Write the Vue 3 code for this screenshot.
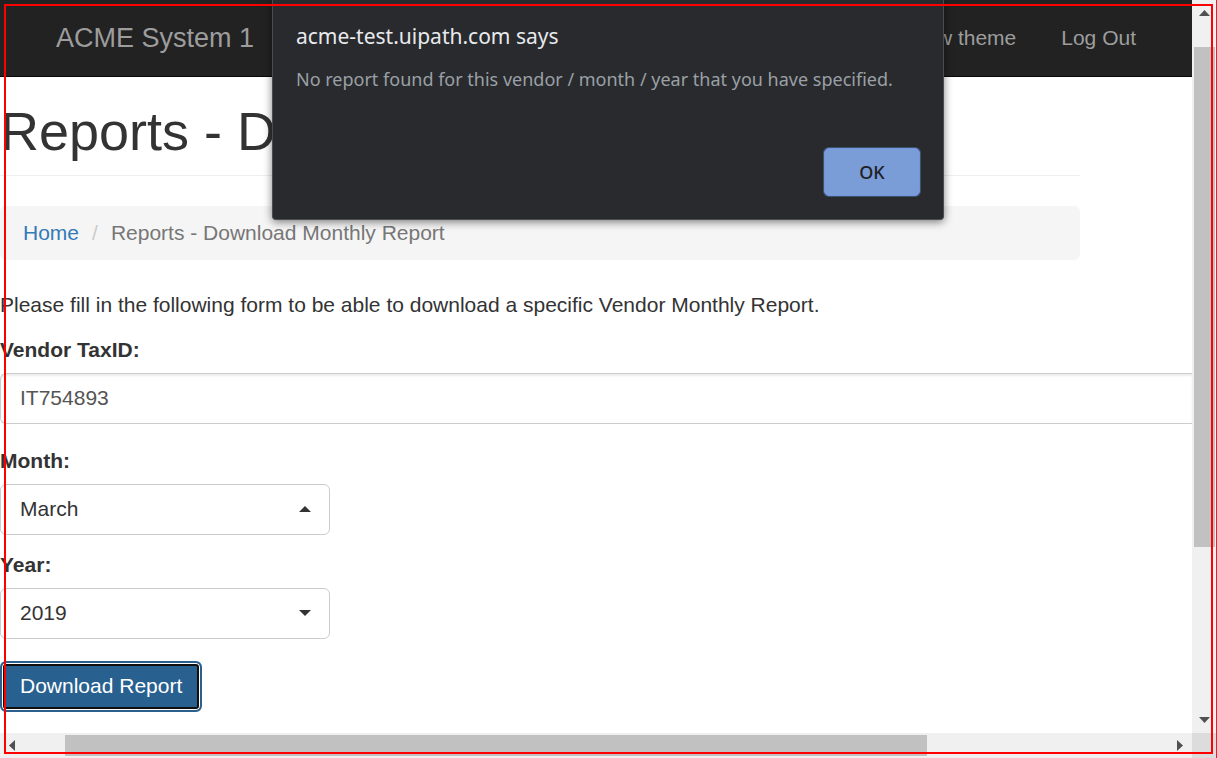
<script setup>
import { ref } from 'vue'

const taxId = ref('IT754893')
const month = ref('March')
const year = ref('2019')
const alertOpen = ref(true)
const months = ['January', 'February', 'March', 'April', 'May', 'June', 'July', 'August', 'September', 'October', 'November', 'December']
const years = ['2017', '2018', '2019', '2020']
</script>

<template>
  <div class="window">
    <div class="page">
      <nav class="navbar">
        <a class="brand" href="#">ACME System 1</a>
        <div class="links">
          <a href="#">New theme</a>
          <a href="#">Log Out</a>
        </div>
      </nav>

      <main>
        <header class="heading">
          <h1>Reports - Download Monthly Report</h1>
        </header>
        <ol class="breadcrumb">
          <li><a href="#">Home</a></li>
          <li class="slash" aria-hidden="true">/</li>
          <li>Reports - Download Monthly Report</li>
        </ol>

        <form @submit.prevent="alertOpen = true">
          <p>Please fill in the following form to be able to download a specific Vendor Monthly Report.</p>
          <div class="field wide">
            <label for="tax">Vendor TaxID:</label>
            <input id="tax" v-model="taxId" type="text" />
          </div>
          <div class="field">
            <label for="month">Month:</label>
            <div class="picker">
              <select id="month" v-model="month">
                <option v-for="m in months" :key="m">{{ m }}</option>
              </select>
              <svg class="caret" viewBox="0 0 12 6"><path d="M0 6L6 0L12 6Z" fill="#333" /></svg>
            </div>
          </div>
          <div class="field last">
            <label for="year">Year:</label>
            <div class="picker">
              <select id="year" v-model="year">
                <option v-for="y in years" :key="y">{{ y }}</option>
              </select>
              <svg class="caret" viewBox="0 0 12 6"><path d="M0 0L12 0L6 6Z" fill="#333" /></svg>
            </div>
          </div>
          <button class="submit" type="submit">Download Report</button>
        </form>
      </main>
    </div>

    <div class="vbar">
      <svg class="tip-v" viewBox="0 0 11 6"><path d="M0 6L5.5 0L11 6Z" fill="#505050" /></svg>
      <div class="vtrack"><div class="vthumb"></div></div>
      <svg class="tip-v" viewBox="0 0 11 6"><path d="M0 0L11 0L5.5 6Z" fill="#505050" /></svg>
    </div>
    <div class="hbar">
      <svg class="tip-h" viewBox="0 0 6 11"><path d="M6 0L0 5.5L6 11Z" fill="#505050" /></svg>
      <div class="htrack"><div class="hthumb"></div></div>
      <svg class="tip-h" viewBox="0 0 6 11"><path d="M0 0L6 5.5L0 11Z" fill="#505050" /></svg>
    </div>
    <div class="corner"></div>

    <div v-if="alertOpen" class="overlay">
      <section class="dialog" role="alertdialog" aria-labelledby="alert-title">
        <h2 id="alert-title">acme-test.uipath.com says</h2>
        <p>No report found for this vendor / month / year that you have specified.</p>
        <button type="button" @click="alertOpen = false">OK</button>
      </section>
    </div>
    <div class="outline"></div>
  </div>
</template>

<style>
body {
  overflow: hidden;
}
</style>

<style scoped>
* {
  box-sizing: border-box;
}
.window {
  position: relative;
  display: grid;
  grid-template-columns: minmax(0, 1fr) 24px;
  grid-template-rows: minmax(0, 1fr) 25px;
  height: 100vh;
  border-right: 1px solid #ed1c2e;
  background: #fff;
  color: #333;
  font: 21px/30px "Liberation Sans", Arial, sans-serif;
}
.page {
  overflow: hidden;
}
a {
  text-decoration: none;
}
.navbar {
  display: flex;
  align-items: center;
  justify-content: space-between;
  height: 77px;
  padding: 0 56px;
  background: #222;
  border-bottom: 1px solid #080808;
}
.navbar a {
  color: #9d9d9d;
}
.navbar .brand {
  font-size: 27px;
}
.links {
  display: flex;
  gap: 45px;
}
.heading {
  margin-right: 112px;
  height: 99px;
  padding-top: 24px;
  border-bottom: 1px solid #eee;
}
h1 {
  margin: 0;
  font-size: 54px;
  line-height: 60px;
  font-weight: 400;
  white-space: nowrap;
}
.breadcrumb {
  display: flex;
  gap: 13px;
  margin: 30px 112px 30px 0;
  padding: 12px 23px;
  list-style: none;
  background: #f5f5f5;
  border-radius: 6px;
  color: #777;
}
.breadcrumb a {
  color: #337ab7;
}
.breadcrumb .slash {
  color: #ccc;
}
form p {
  margin: 0 0 15px;
}
.field {
  display: flex;
  flex-direction: column;
  align-items: flex-start;
  gap: 8px;
  margin-bottom: 15px;
}
.field.wide,
.field.last {
  margin-bottom: 22px;
}
.field.wide {
  align-items: stretch;
}
label {
  font-weight: 700;
}
input,
select {
  height: 51px;
  margin: 0;
  padding: 0 19px 2px;
  border: 1px solid #ccc;
  border-radius: 6px;
  background: #fff;
  font: inherit;
}
input {
  color: #555;
  border-right: 0;
  border-radius: 6px 0 0 6px;
  box-shadow: inset 0 2px 2px rgba(0, 0, 0, 0.075);
}
.picker {
  position: relative;
  width: 330px;
}
select {
  display: block;
  width: 100%;
  appearance: none;
  color: #333;
}
.caret {
  position: absolute;
  right: 19px;
  top: 22px;
  width: 12px;
  height: 6px;
  pointer-events: none;
}
.submit {
  display: block;
  height: 51px;
  padding: 0 18px 2px;
  border: 2px solid #2a5f8e;
  border-radius: 6px;
  background: #286090;
  box-shadow: inset 0 0 0 1px #fff, inset 0 0 0 3px #101010;
  color: #fff;
  font: inherit;
}
.vbar,
.hbar {
  display: flex;
  align-items: center;
  background: #f0f0f0;
}
.vbar {
  flex-direction: column;
  padding: 10px 0;
}
.hbar {
  padding: 0 9px;
}
.tip-v {
  width: 11px;
  height: 6px;
}
.tip-h {
  width: 6px;
  height: 11px;
}
.vtrack {
  flex: 1;
  width: 21px;
  padding-top: 31px;
}
.vthumb {
  height: 74.6%;
  background: #c1c1c1;
}
.htrack {
  flex: 1;
  padding-left: 50px;
}
.hthumb {
  width: 77.5%;
  height: 21px;
  background: #c1c1c1;
}
.corner {
  background: #dcdcdc;
}
.overlay {
  position: absolute;
  inset: 0;
  display: flex;
  justify-content: center;
  align-items: flex-start;
}
.dialog {
  display: flex;
  flex-direction: column;
  width: 672px;
  height: 220px;
  padding: 21px 23px 23px;
  background: #292a2d;
  border: 1px solid #4b4c4f;
  border-top: 0;
  border-radius: 0 0 4px 4px;
  box-shadow: 0 2px 8px rgba(0, 0, 0, 0.5);
  font-family: "Noto Sans", "Open Sans", sans-serif;
}
.dialog h2 {
  margin: 0 0 13px;
  color: #e8eaed;
  font-size: 21px;
  line-height: 30px;
  font-weight: 400;
}
.dialog p {
  margin: 0;
  color: #9aa0a6;
  font-size: 18px;
  line-height: 30px;
  white-space: nowrap;
}
.dialog button {
  align-self: flex-end;
  width: 96px;
  height: 48px;
  margin-top: auto;
  border: 1px solid #6f98dd;
  border-radius: 5px;
  background: #7a9dd8;
  box-shadow: 0 0 0 1px #41506b;
  color: #202124;
  font: 500 18px "Noto Sans", "Open Sans", sans-serif;
}
.outline {
  position: absolute;
  inset: 4px 3px 4px 4px;
  border: 2px solid #f00;
  pointer-events: none;
}
</style>
